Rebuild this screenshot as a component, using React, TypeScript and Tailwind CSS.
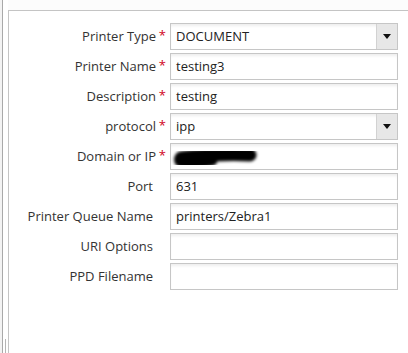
import React from "react";

type Row = { label: string; required?: boolean; value?: string; select?: boolean; redacted?: boolean };

const rows: Row[] = [
  { label: "Printer Type", required: true, value: "DOCUMENT", select: true },
  { label: "Printer Name", required: true, value: "testing3" },
  { label: "Description", required: true, value: "testing" },
  { label: "protocol", required: true, value: "ipp", select: true },
  { label: "Domain or IP", required: true, redacted: true },
  { label: "Port", value: "631" },
  { label: "Printer Queue Name", value: "printers/Zebra1" },
  { label: "URI Options", value: "" },
  { label: "PPD Filename", value: "" },
];

function Field({ row }: { row: Row }) {
  return (
    <div className="flex items-center h-[27px]">
      <div className="w-[161px] shrink-0 flex justify-end items-center text-[#333333] pr-[4px]">
        <span>{row.label}</span>
        {row.required ? (
          <span className="text-[#d0021b] w-[10px] text-right text-[13px] leading-none -mt-[2px]">*</span>
        ) : (
          <span className="w-[13px]" />
        )}
      </div>
      <div className="relative w-[228px] h-[27px] border border-[#c6c6c6] bg-white shadow-[inset_0_3px_3px_-1px_rgba(0,0,0,0.07)] flex items-center">
        <span className="pl-[5px] flex-1 text-[#222222] whitespace-nowrap">{row.value}</span>
        {row.select && (
          <div className="w-[21px] h-full border-l border-[#d2d2d2] bg-[#e7e7e7] flex items-center justify-center">
            <svg width="8" height="5" viewBox="0 0 8 5">
              <path d="M0 0 H8 L4 5 Z" fill="#111" />
            </svg>
          </div>
        )}
        {row.redacted && (
          <svg className="absolute left-0 top-0" width="100" height="25" viewBox="0 0 100 25">
            <defs>
              <filter id="blur" x="-20%" y="-50%" width="140%" height="200%">
                <feGaussianBlur stdDeviation="1.7" />
              </filter>
            </defs>
            <g filter="url(#blur)">
              <path
                d="M10 14 C 28 11, 60 10, 79 11"
                stroke="#050505"
                strokeWidth="13"
                fill="none"
                strokeLinecap="round"
              />
              <path d="M10 16 C 16 18, 30 17, 40 15" stroke="#050505" strokeWidth="14" fill="none" strokeLinecap="round" />
            </g>
          </svg>
        )}
      </div>
    </div>
  );
}

export default function App() {
  return (
    <div
      className="w-[408px] h-[353px] bg-white flex overflow-hidden text-[13px]"
      style={{ fontFamily: '"Open Sans", "Noto Sans", sans-serif' }}
    >
      <div className="w-[2px] h-full bg-[#f3f3f3]" />
      <div className="w-px h-full bg-[#a9a9a9]" />
      <div className="w-[5px] h-full flex flex-col justify-end items-center">
        <div className="w-px h-[14px] bg-[#b5b5b5] mr-[1px]" />
      </div>
      <div className="flex-1 flex flex-col">
        <div className="h-[10px] bg-[#fcfcfc]" />
        <div className="flex-1 border-t border-l border-[#c4c4c4] pt-[12px] flex flex-col gap-[3px]">
          {rows.map((r) => (
            <Field key={r.label} row={r} />
          ))}
        </div>
      </div>
    </div>
  );
}
